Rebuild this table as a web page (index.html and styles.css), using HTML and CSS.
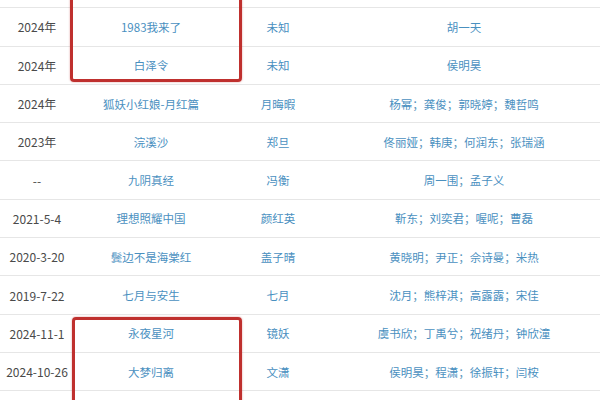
FILE: index.html
```html
<!DOCTYPE html>
<html lang="zh-CN">
<head>
    <meta charset="UTF-8">
    <meta name="viewport" content="width=device-width, initial-scale=1.0">
    <title>角色列表</title>
    <link rel="stylesheet" href="styles.css">
</head>
<body>
    <div class="page">
        <table class="roles">
            <colgroup>
                <col class="c-date">
                <col class="c-title">
                <col class="c-role">
                <col class="c-cast">
            </colgroup>
            <tbody>
                <tr class="cut">
                    <td class="date"></td>
                    <td></td>
                    <td></td>
                    <td></td>
                </tr>
                <tr>
                    <td class="date">2024年</td>
                    <td><a href="#">1983我来了</a></td>
                    <td><a href="#">未知</a></td>
                    <td><a href="#">胡一天</a></td>
                </tr>
                <tr>
                    <td class="date">2024年</td>
                    <td><a href="#">白泽令</a></td>
                    <td><a href="#">未知</a></td>
                    <td><a href="#">侯明昊</a></td>
                </tr>
                <tr>
                    <td class="date">2024年</td>
                    <td><a href="#">狐妖小红娘-月红篇</a></td>
                    <td><a href="#">月晦暇</a></td>
                    <td><a href="#">杨幂</a>；<a href="#">龚俊</a>；<a href="#">郭晓婷</a>；<a href="#">魏哲鸣</a></td>
                </tr>
                <tr>
                    <td class="date">2023年</td>
                    <td><a href="#">浣溪沙</a></td>
                    <td><a href="#">郑旦</a></td>
                    <td><a href="#">佟丽娅</a>；<a href="#">韩庚</a>；<a href="#">何润东</a>；<a href="#">张瑞涵</a></td>
                </tr>
                <tr>
                    <td class="date">--</td>
                    <td><a href="#">九阴真经</a></td>
                    <td><a href="#">冯衡</a></td>
                    <td><a href="#">周一围</a>；<a href="#">孟子义</a></td>
                </tr>
                <tr>
                    <td class="date">2021-5-4</td>
                    <td><a href="#">理想照耀中国</a></td>
                    <td><a href="#">颜红英</a></td>
                    <td><a href="#">靳东</a>；<a href="#">刘奕君</a>；<a href="#">喔呢</a>；<a href="#">曹磊</a></td>
                </tr>
                <tr>
                    <td class="date">2020-3-20</td>
                    <td><a href="#">鬓边不是海棠红</a></td>
                    <td><a href="#">盖子晴</a></td>
                    <td><a href="#">黄晓明</a>；<a href="#">尹正</a>；<a href="#">佘诗曼</a>；<a href="#">米热</a></td>
                </tr>
                <tr>
                    <td class="date">2019-7-22</td>
                    <td><a href="#">七月与安生</a></td>
                    <td><a href="#">七月</a></td>
                    <td><a href="#">沈月</a>；<a href="#">熊梓淇</a>；<a href="#">高露露</a>；<a href="#">宋佳</a></td>
                </tr>
                <tr>
                    <td class="date">2024-11-1</td>
                    <td><a href="#">永夜星河</a></td>
                    <td><a href="#">镜妖</a></td>
                    <td><a href="#">虞书欣</a>；<a href="#">丁禹兮</a>；<a href="#">祝绪丹</a>；<a href="#">钟欣潼</a></td>
                </tr>
                <tr>
                    <td class="date">2024-10-26</td>
                    <td><a href="#">大梦归离</a></td>
                    <td><a href="#">文潇</a></td>
                    <td><a href="#">侯明昊</a>；<a href="#">程潇</a>；<a href="#">徐振轩</a>；<a href="#">闫桉</a></td>
                </tr>
                <tr class="cut">
                    <td class="date"></td>
                    <td></td>
                    <td></td>
                    <td></td>
                </tr>
            </tbody>
        </table>

        <!-- red highlight boxes drawn over the table -->
        <div class="mark mark-top"></div>
        <div class="mark mark-bottom"></div>
    </div>
</body>
</html>
```

FILE: styles.css
```css
html, body {
    margin: 0;
    padding: 0;
    background: #fff;
    overflow: hidden;
}
body {
    font-family: "Noto Sans CJK SC", "Noto Sans", sans-serif;
    font-size: 11.5px;
}
.page {
    position: relative;
    width: 600px;
    height: 400px;
    overflow: hidden;
}
.roles {
    width: 600px;
    margin-top: -30px;
    border-collapse: collapse;
    table-layout: fixed;
}
.c-date { width: 74px; }
.c-title { width: 154px; }
.c-role { width: 100px; }
.c-cast { width: 272px; }
.roles td {
    height: 37.3px;
    padding: 0;
    text-align: center;
    vertical-align: middle;
    border-bottom: 1px solid #e6e6e6;
    color: #5b96bb;
    white-space: nowrap;
}
.roles td.date {
    color: #4a4a4a;
    font-size: 12px;
}
.roles a {
    color: #4a90bf;
    text-decoration: none;
}
.mark {
    position: absolute;
    border: 3px solid #bf302e;
    border-radius: 4px;
    box-shadow: 0 0 2px rgba(191, 48, 46, 0.5);
}
.mark-top {
    left: 70px;
    top: -12px;
    width: 166px;
    height: 88px;
}
.mark-bottom {
    left: 72px;
    top: 317px;
    width: 164px;
    height: 110px;
}
```
